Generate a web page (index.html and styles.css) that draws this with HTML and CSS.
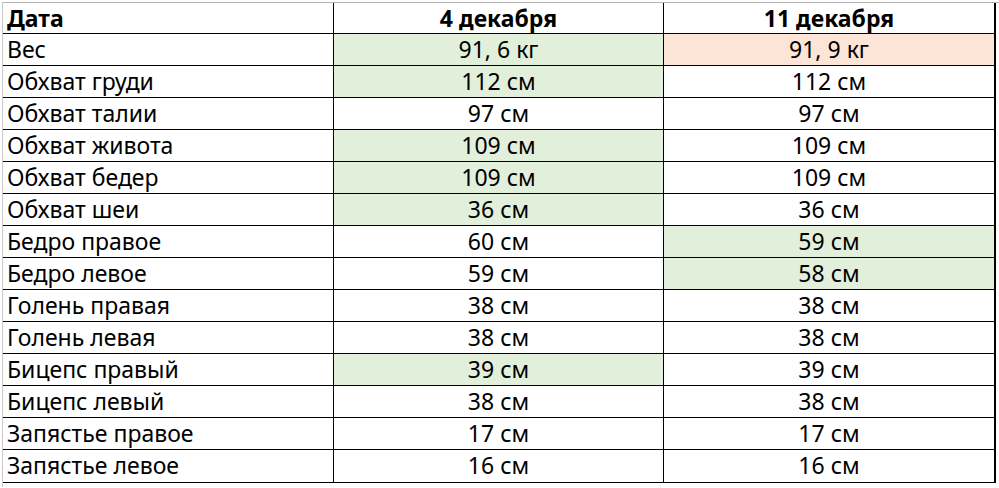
FILE: index.html
```html
<!DOCTYPE html>
<html lang="ru">
<head>
<meta charset="utf-8">
<title>Замеры</title>
<link rel="stylesheet" href="styles.css">
</head>
<body>
<div class="sheet">
  <div class="grid">
    <div class="cell head left">Дата</div>
    <div class="cell head">4 декабря</div>
    <div class="cell head last">11 декабря</div>

    <div class="cell left">Вес</div>
    <div class="cell green">91, 6 кг</div>
    <div class="cell last peach">91, 9 кг</div>

    <div class="cell left">Обхват груди</div>
    <div class="cell green">112 см</div>
    <div class="cell last">112 см</div>

    <div class="cell left">Обхват талии</div>
    <div class="cell">97 см</div>
    <div class="cell last">97 см</div>

    <div class="cell left">Обхват живота</div>
    <div class="cell green">109 см</div>
    <div class="cell last">109 см</div>

    <div class="cell left">Обхват бедер</div>
    <div class="cell green">109 см</div>
    <div class="cell last">109 см</div>

    <div class="cell left">Обхват шеи</div>
    <div class="cell green">36 см</div>
    <div class="cell last">36 см</div>

    <div class="cell left">Бедро правое</div>
    <div class="cell">60 см</div>
    <div class="cell last green">59 см</div>

    <div class="cell left">Бедро левое</div>
    <div class="cell">59 см</div>
    <div class="cell last green">58 см</div>

    <div class="cell left">Голень правая</div>
    <div class="cell">38 см</div>
    <div class="cell last">38 см</div>

    <div class="cell left">Голень левая</div>
    <div class="cell">38 см</div>
    <div class="cell last">38 см</div>

    <div class="cell left">Бицепс правый</div>
    <div class="cell green">39 см</div>
    <div class="cell last">39 см</div>

    <div class="cell left">Бицепс левый</div>
    <div class="cell">38 см</div>
    <div class="cell last">38 см</div>

    <div class="cell left">Запястье правое</div>
    <div class="cell">17 см</div>
    <div class="cell last">17 см</div>

    <div class="cell left">Запястье левое</div>
    <div class="cell">16 см</div>
    <div class="cell last">16 см</div>
  </div>
</div>
</body>
</html>
```
FILE: styles.css
```css
html, body {
  margin: 0;
  padding: 0;
  background: #ffffff;
}

body {
  font-family: "Noto Sans", "Open Sans", sans-serif;
  font-size: 23px;
  color: #000000;
}

.sheet {
  margin: 2px 0 0 2px;
  border-top: 1px solid #b4b4b4;
  border-left: 1px solid #c8c8c8;
  height: 485px;
  box-sizing: border-box;
}

.grid {
  display: grid;
  grid-template-columns: 331px 330px 332px;
  grid-template-rows: 31px repeat(13, 32px) 33px;
  width: 993px;
}

.cell {
  border-right: 1px solid #000000;
  border-bottom: 1px solid #000000;
  text-align: center;
  line-height: 31px;
  white-space: nowrap;
  overflow: hidden;
  box-sizing: border-box;
}

.cell.head {
  line-height: 30px;
  font-weight: 700;
}

.cell.left {
  text-align: left;
  padding-left: 4px;
}

.cell.last {
  border-right-width: 2px;
}

.green {
  background: #e2efda;
}

.peach {
  background: #fce4d6;
}
```
